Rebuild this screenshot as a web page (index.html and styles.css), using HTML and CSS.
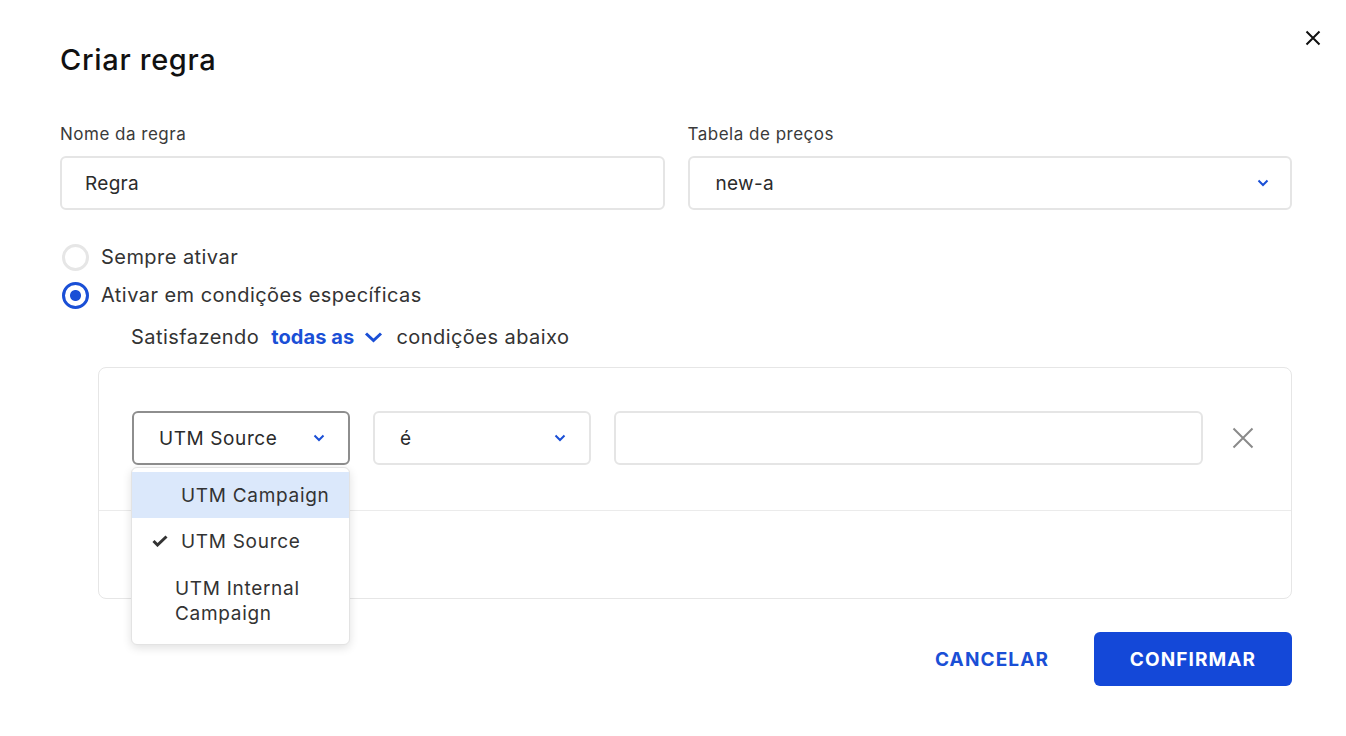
FILE: index.html
```html
<!DOCTYPE html>
<html lang="pt">
<head>
<meta charset="utf-8">
<title>Criar regra</title>
<link rel="stylesheet" href="styles.css">
</head>
<body>
<div class="dialog">
  <button class="close" aria-label="Fechar">
    <svg width="16" height="16" viewBox="0 0 16 16"><path d="M1.5 1.5 L14.5 14.5 M14.5 1.5 L1.5 14.5" stroke="#111" stroke-width="2" fill="none"/></svg>
  </button>
  <h1 class="title">Criar regra</h1>

  <div class="fields">
    <div class="field">
      <label class="label">Nome da regra</label>
      <div class="input">Regra</div>
    </div>
    <div class="field">
      <label class="label">Tabela de preços</label>
      <div class="input select">
        <span>new-a</span>
        <svg class="chev" width="12" height="8" viewBox="0 0 12 8"><path d="M1.5 1.5 L6 6 L10.5 1.5" stroke="#1a4fd6" stroke-width="2" fill="none"/></svg>
      </div>
    </div>
  </div>

  <div class="radios">
    <div class="radio-row"><span class="radio"></span><span>Sempre ativar</span></div>
    <div class="radio-row"><span class="radio checked"></span><span>Ativar em condições específicas</span></div>
  </div>

  <div class="satisfy">
    <span>Satisfazendo</span>
    <span class="todas">todas as
      <svg width="19" height="12" viewBox="0 0 19 12"><path d="M2 2.5 L9.5 9.5 L17 2.5" stroke="#1a4fd6" stroke-width="3" fill="none"/></svg>
    </span>
    <span>condições abaixo</span>
  </div>

  <div class="conditions">
    <div class="cond-row">
      <div class="cond-select-wrap">
        <div class="input select small focused">
          <span>UTM Source</span>
          <svg class="chev" width="12" height="8" viewBox="0 0 12 8"><path d="M1.5 1.5 L6 6 L10.5 1.5" stroke="#1a4fd6" stroke-width="2" fill="none"/></svg>
        </div>
        <ul class="menu">
          <li class="item hover"><span class="check"></span>UTM Campaign</li>
          <li class="item"><span class="check"><svg width="16" height="12" viewBox="0 0 16 12"><path d="M1.5 6 L5.5 10 L14.5 1.5" stroke="#333" stroke-width="3" fill="none"/></svg></span>UTM Source</li>
          <li class="item wrap">UTM Internal Campaign</li>
        </ul>
      </div>
      <div class="input select small">
        <span>é</span>
        <svg class="chev" width="12" height="8" viewBox="0 0 12 8"><path d="M1.5 1.5 L6 6 L10.5 1.5" stroke="#1a4fd6" stroke-width="2" fill="none"/></svg>
      </div>
      <div class="input value"></div>
      <button class="remove" aria-label="Remover">
        <svg width="22" height="22" viewBox="0 0 22 22"><path d="M1.5 1.5 L20.5 20.5 M20.5 1.5 L1.5 20.5" stroke="#8a8a8a" stroke-width="2" fill="none"/></svg>
      </button>
    </div>
    <div class="cond-footer"></div>
  </div>

  <div class="actions">
    <button class="btn-text">CANCELAR</button>
    <button class="btn-primary">CONFIRMAR</button>
  </div>
</div>
</body>
</html>
```

FILE: styles.css
```css
* { box-sizing: border-box; }
html, body { margin: 0; padding: 0; background: #fff; }
body {
  font-family: Inter, "Open Sans", sans-serif;
  color: #333;
  width: 1346px;
  height: 736px;
  overflow: hidden;
}
.dialog {
  position: relative;
  padding: 40px 54px 0 60px;
}
.close {
  position: absolute;
  top: 30px;
  right: 25px;
  border: 0;
  background: none;
  padding: 0;
  width: 16px;
  height: 16px;
  display: flex;
}
.title {
  margin: 0;
  font-size: 29px;
  font-weight: 500;
  line-height: 40px;
  color: #111;
  letter-spacing: 0.7px;
}
.fields {
  display: grid;
  grid-template-columns: 1fr 1fr;
  column-gap: 23px;
  margin-top: 42px;
}
.field { display: flex; flex-direction: column; }
.label {
  font-size: 17px;
  line-height: 24px;
  color: #3a3a3a;
  margin-bottom: 10px;
  letter-spacing: 0.5px;
}
.input {
  height: 54px;
  border: 2px solid #e5e5e5;
  border-radius: 6px;
  padding: 0 22px 0 23px;
  display: flex;
  align-items: center;
  font-size: 19px;
  color: #2b2b2b;
  background: #fff;
  letter-spacing: 0.3px;
}
.select { justify-content: space-between; padding-right: 21px; padding-left: 26px; }
.radios {
  margin-top: 34px;
  display: flex;
  flex-direction: column;
  gap: 12px;
}
.radio-row {
  display: flex;
  align-items: center;
  gap: 12px;
  font-size: 20px;
  letter-spacing: 0.45px;
  color: #333;
  height: 26px;
  margin-left: 2px;
}
.radio {
  width: 27px;
  height: 27px;
  border-radius: 50%;
  border: 3px solid #e6e6e6;
  display: inline-block;
  background: #fff;
  flex: none;
}
.radio.checked {
  border-color: #1a4fd6;
  background: radial-gradient(circle, #1a4fd6 0 5px, #fff 6px);
}
.satisfy {
  margin-top: 14px;
  margin-left: 71px;
  display: flex;
  align-items: center;
  gap: 11px;
  font-size: 20px;
  letter-spacing: 0.45px;
  color: #333;
  height: 30px;
}
.todas {
  color: #1a4fd6;
  font-weight: 700;
  letter-spacing: 0.1px;
  display: inline-flex;
  align-items: center;
  gap: 10px;
  margin-left: 1px;
  margin-right: 2px;
}
.conditions {
  margin-top: 15px;
  margin-left: 38px;
  border: 1px solid #e6e6e6;
  border-radius: 8px;
  height: 232px;
  display: flex;
  flex-direction: column;
}
.cond-row {
  display: flex;
  padding: 43px 0 0 33px;
  height: 143px;
  border-bottom: 1px solid #ebebeb;
  align-items: flex-start;
}
.cond-select-wrap { position: relative; width: 218px; margin-right: 23px; }
.small { width: 218px; padding-left: 25px; padding-right: 23px; font-size: 19px; letter-spacing: 0.6px; }
.cond-select-wrap .small { width: 100%; }
.focused { border-color: #8e8e8e; }
.value { width: 589px; margin-left: 23px; }
.remove {
  border: 0;
  background: none;
  padding: 0;
  margin: 16px 0 0 29px;
  width: 22px;
  height: 22px;
  display: flex;
}
.menu {
  position: absolute;
  top: 56px;
  left: -1px;
  width: 219px;
  margin: 0;
  padding: 4px 0 6px;
  list-style: none;
  background: #fff;
  border: 1px solid #e3e3e3;
  border-radius: 6px;
  box-shadow: 0 3px 10px rgba(0,0,0,0.12);
  z-index: 5;
}
.item {
  display: flex;
  align-items: center;
  height: 46px;
  padding-left: 20px;
  font-size: 19px;
  letter-spacing: 0.7px;
  color: #333;
}
.item.hover { background: #dbe8fb; }
.check { width: 29px; display: inline-flex; align-items: center; flex: none; }
.item.wrap {
  height: auto;
  padding: 12px 20px 12px 43px;
  line-height: 25px;
}
.actions {
  display: flex;
  justify-content: flex-end;
  align-items: center;
  margin-top: 33px;
  gap: 45px;
}
.btn-text {
  border: 0;
  background: none;
  font-family: inherit;
  font-size: 19px;
  font-weight: 700;
  color: #1a4fd6;
  padding: 0;
  letter-spacing: 1.1px;
}
.btn-primary {
  border: 0;
  background: #1448d8;
  color: #fff;
  font-family: inherit;
  font-size: 19px;
  font-weight: 700;
  width: 198px;
  height: 54px;
  border-radius: 6px;
  letter-spacing: 1.1px;
}
```
